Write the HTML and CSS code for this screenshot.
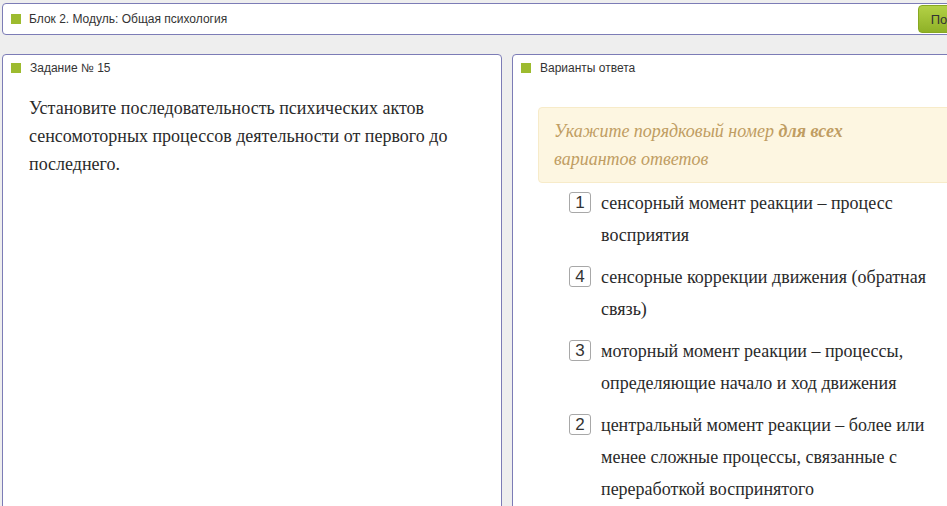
FILE: index.html
```html
<!DOCTYPE html>
<html lang="ru">
<head>
    <meta charset="UTF-8">
    <title>Тестирование</title>
    <link rel="stylesheet" href="styles.css">
</head>
<body>
    <div class="page">
        <div class="top-bar">
            <span class="marker"></span>
            <span class="top-title">Блок 2. Модуль: Общая психология</span>
            <button class="btn-next">Подтвердить</button>
        </div>

        <div class="panels">
            <div class="panel">
                <div class="panel-head"><span class="marker"></span>Задание № 15</div>
                <p class="question">Установите последовательность психических актов сенсомоторных процессов деятельности от первого до последнего.</p>
            </div>

            <div class="panel">
                <div class="panel-head"><span class="marker"></span>Варианты ответа</div>
                <div class="hint">
                    <p>Укажите порядковый номер <b>для всех</b> вариантов ответов</p>
                </div>
                <ul class="answers">
                    <li><span class="num">1</span><span class="answer-text">сенсорный момент реакции – процесс восприятия</span></li>
                    <li><span class="num">4</span><span class="answer-text">сенсорные коррекции движения (обратная связь)</span></li>
                    <li><span class="num">3</span><span class="answer-text">моторный момент реакции – процессы, определяющие начало и ход движения</span></li>
                    <li><span class="num">2</span><span class="answer-text">центральный момент реакции – более или менее сложные процессы, связанные с переработкой воспринятого</span></li>
                </ul>
            </div>
        </div>
    </div>
</body>
</html>
```

FILE: styles.css
```css
html, body {
    margin: 0;
    overflow: hidden;
}

body {
    background-color: #eeeeee;
    font-family: Tahoma, "DejaVu Sans", sans-serif;
    color: #333;
}

.page {
    width: 1025px;
    padding: 3px 0 0 2px;
}

.marker {
    display: inline-block;
    width: 10px;
    height: 10px;
    background-color: #9dbb2f;
    flex-shrink: 0;
}

.top-bar {
    display: flex;
    align-items: center;
    height: 30px;
    background-color: #fff;
    border: 1px solid #7c7cb6;
    border-radius: 4px;
    padding: 0 4px 0 8px;
}

.top-title {
    flex: 1;
    margin-left: 8px;
    font-size: 12px;
    font-family: "Liberation Sans", Arial, sans-serif;
}

.btn-next {
    height: 28px;
    padding: 0 12px;
    border: 1px solid #87a821;
    border-radius: 4px;
    background: linear-gradient(#b3d146, #8fb127);
    color: #333;
    font-size: 13px;
    font-family: "Liberation Sans", Arial, sans-serif;
}

.panels {
    display: flex;
    gap: 10px;
    margin-top: 19px;
}

.panel {
    width: 498px;
    height: 480px;
    background-color: #fff;
    border: 1px solid #7c7cb6;
    border-radius: 4px;
}

.panel-head {
    display: flex;
    align-items: center;
    padding: 8px 0 0 8px;
    height: 10px;
    font-size: 12px;
    font-family: "Liberation Sans", Arial, sans-serif;
}

.panel-head .marker {
    margin-right: 9px;
}

.question {
    margin: 21px 0 0 26px;
    width: 450px;
    font-family: "Liberation Serif", "Times New Roman", serif;
    font-size: 18px;
    line-height: 28px;
    color: #2a2a2a;
}

.hint {
    margin: 34px 0 0 25px;
    padding: 9px 15px;
    background-color: #fdf6e1;
    border: 1px solid #f7ebc9;
    border-radius: 4px;
}

.hint p {
    margin: 0;
    width: 330px;
    font-family: "Liberation Serif", "Times New Roman", serif;
    font-style: italic;
    font-size: 18px;
    line-height: 28px;
    color: #c09d62;
}

.answers {
    list-style: none;
    margin: 4px 0 0 56px;
    padding: 0;
}

.answers li {
    display: flex;
    align-items: flex-start;
    margin-bottom: 10px;
}

.num {
    width: 20px;
    height: 19px;
    margin-top: 5px;
    border: 1px solid #a8a8a8;
    border-radius: 3px;
    text-align: center;
    font-family: "Liberation Sans", Arial, sans-serif;
    font-size: 17px;
    line-height: 19px;
    color: #333;
    flex-shrink: 0;
}

.answer-text {
    width: 345px;
    margin-left: 10px;
    font-family: "Liberation Serif", "Times New Roman", serif;
    font-size: 18px;
    line-height: 32px;
    color: #2a2a2a;
}
```
